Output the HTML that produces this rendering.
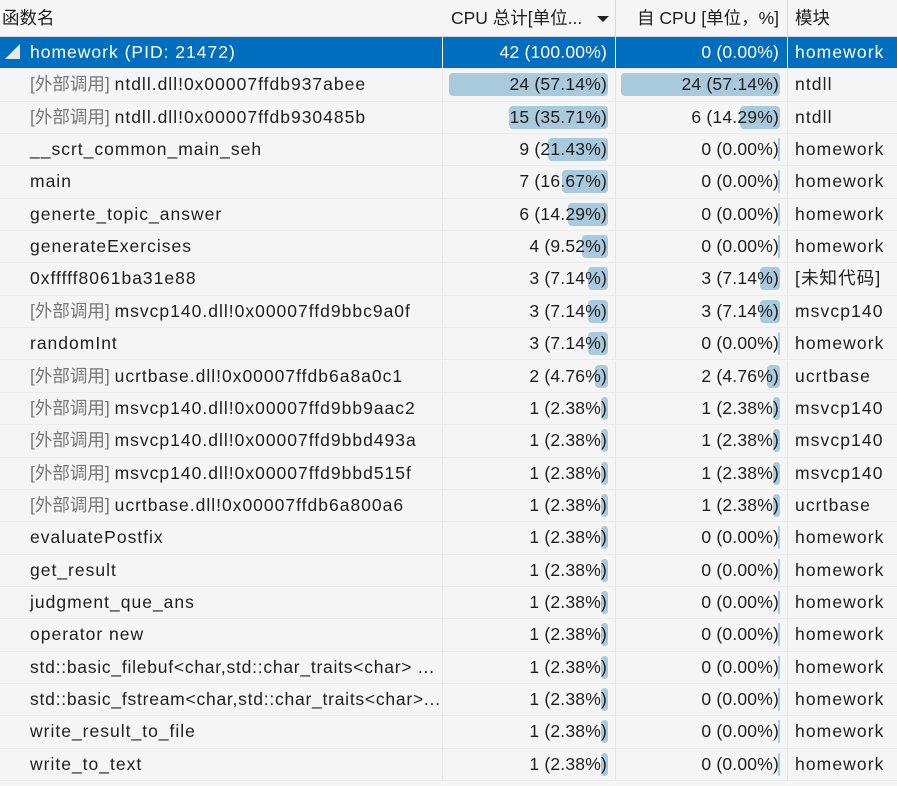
<!DOCTYPE html>
<html><head><meta charset="utf-8"><style>
*{margin:0;padding:0;box-sizing:border-box}
body{width:897px;height:786px;overflow:hidden;background:#f5f5f5;font-family:"Liberation Sans","Noto Sans CJK SC",sans-serif;font-size:17.5px;color:#1e1e1e}
.hdr{position:absolute;left:0;top:0;width:897px;height:37px;background:#f5f5f5;border-bottom:1px solid #d6d6dc}
.r{position:absolute;left:0;width:897px;height:32.35px;border-bottom:1px solid #ebebeb}
.c{position:absolute;top:0;height:100%;line-height:31px;white-space:nowrap}
.c1{left:0;width:443px;padding-left:30px;border-right:1px solid #e6e6e6;overflow:hidden}
.c2{left:443px;width:173px;border-right:1px solid #e6e6e6}
.c3{left:616px;width:172px;border-right:1px solid #e6e6e6}
.c4{left:788px;width:109px;padding-left:7px;letter-spacing:1.1px}
.n{letter-spacing:1px}
.t{position:absolute;right:8px;top:0;letter-spacing:0.2px}
.b{position:absolute;right:7px;top:4px;height:23px;background:#a9c9dc;border-radius:4px}
.g{color:#777}
.sel{background:#006ebf;color:#fff}
.sel .c{border-right-color:#fff}
</style></head><body>
<div class="hdr">
<div class="c" style="left:2px;line-height:37px">函数名</div>
<div class="c" style="left:443px;width:173px;border-right:1px solid #d6d6dc;height:37px;line-height:37px;padding-left:8px">CPU 总计[单位...<span style="position:absolute;right:6px;top:16px;width:0;height:0;border-left:6px solid transparent;border-right:6px solid transparent;border-top:6px solid #222"></span></div>
<div class="c" style="left:616px;width:172px;border-right:1px solid #d6d6dc;height:37px;line-height:37px;text-align:right;padding-right:8px">自 CPU [单位，%]</div>
<div class="c" style="left:795px;line-height:37px">模块</div>
</div>
<div id="rows"></div>
<script>
var d=[
["homework (PID: 21472)",0,"42 (100.00%)",-1,"0 (0.00%)",-1,"homework"],
["ntdll.dll!0x00007ffdb937abee",1,"24 (57.14%)",57.14,"24 (57.14%)",57.14,"ntdll"],
["ntdll.dll!0x00007ffdb930485b",1,"15 (35.71%)",35.71,"6 (14.29%)",14.29,"ntdll"],
["__scrt_common_main_seh",0,"9 (21.43%)",21.43,"0 (0.00%)",0,"homework"],
["main",0,"7 (16.67%)",16.67,"0 (0.00%)",0,"homework"],
["generte_topic_answer",0,"6 (14.29%)",14.29,"0 (0.00%)",0,"homework"],
["generateExercises",0,"4 (9.52%)",9.52,"0 (0.00%)",0,"homework"],
["0xfffff8061ba31e88",0,"3 (7.14%)",7.14,"3 (7.14%)",7.14,"[未知代码]"],
["msvcp140.dll!0x00007ffd9bbc9a0f",1,"3 (7.14%)",7.14,"3 (7.14%)",7.14,"msvcp140"],
["randomInt",0,"3 (7.14%)",7.14,"0 (0.00%)",0,"homework"],
["ucrtbase.dll!0x00007ffdb6a8a0c1",1,"2 (4.76%)",4.76,"2 (4.76%)",4.76,"ucrtbase"],
["msvcp140.dll!0x00007ffd9bb9aac2",1,"1 (2.38%)",2.38,"1 (2.38%)",2.38,"msvcp140"],
["msvcp140.dll!0x00007ffd9bbd493a",1,"1 (2.38%)",2.38,"1 (2.38%)",2.38,"msvcp140"],
["msvcp140.dll!0x00007ffd9bbd515f",1,"1 (2.38%)",2.38,"1 (2.38%)",2.38,"msvcp140"],
["ucrtbase.dll!0x00007ffdb6a800a6",1,"1 (2.38%)",2.38,"1 (2.38%)",2.38,"ucrtbase"],
["evaluatePostfix",0,"1 (2.38%)",2.38,"0 (0.00%)",0,"homework"],
["get_result",0,"1 (2.38%)",2.38,"0 (0.00%)",0,"homework"],
["judgment_que_ans",0,"1 (2.38%)",2.38,"0 (0.00%)",0,"homework"],
["operator new",0,"1 (2.38%)",2.38,"0 (0.00%)",0,"homework"],
["std::basic_filebuf&lt;char,std::char_traits&lt;char&gt; ...",0,"1 (2.38%)",2.38,"0 (0.00%)",0,"homework"],
["std::basic_fstream&lt;char,std::char_traits&lt;char&gt;...",0,"1 (2.38%)",2.38,"0 (0.00%)",0,"homework"],
["write_result_to_file",0,"1 (2.38%)",2.38,"0 (0.00%)",0,"homework"],
["write_to_text",0,"1 (2.38%)",2.38,"0 (0.00%)",0,"homework"]];
var h="";
d.forEach(function(r,i){
var top=37+i*32.35;
var bar=function(p){if(p<0)return"";var w=p==0?2:Math.max(4,p*2.78);return '<div class="b" style="width:'+w.toFixed(1)+'px'+(p==0?';border-radius:1px':'')+'"></div>';};
var ls=(i>=19&&i<=20)?' style="letter-spacing:0.75px"':'';
var name=i==0?'<span style="position:absolute;left:5px;top:0;font-size:15px;color:#e8e8e8">&#9698;</span><span class="n">'+r[0]+'</span>':(r[1]?'<span class="g">[外部调用]</span> ':'')+'<span class="n"'+ls+'>'+r[0]+'</span>';
h+='<div class="r'+(i==0?' sel':'')+'" style="top:'+top+'px"><div class="c c1">'+name+'</div><div class="c c2">'+bar(r[3])+'<span class="t">'+r[2]+'</span></div><div class="c c3">'+bar(r[5])+'<span class="t">'+r[4]+'</span></div><div class="c c4">'+r[6]+'</div></div>';
});
document.getElementById("rows").innerHTML=h;
</script>
</body></html>
